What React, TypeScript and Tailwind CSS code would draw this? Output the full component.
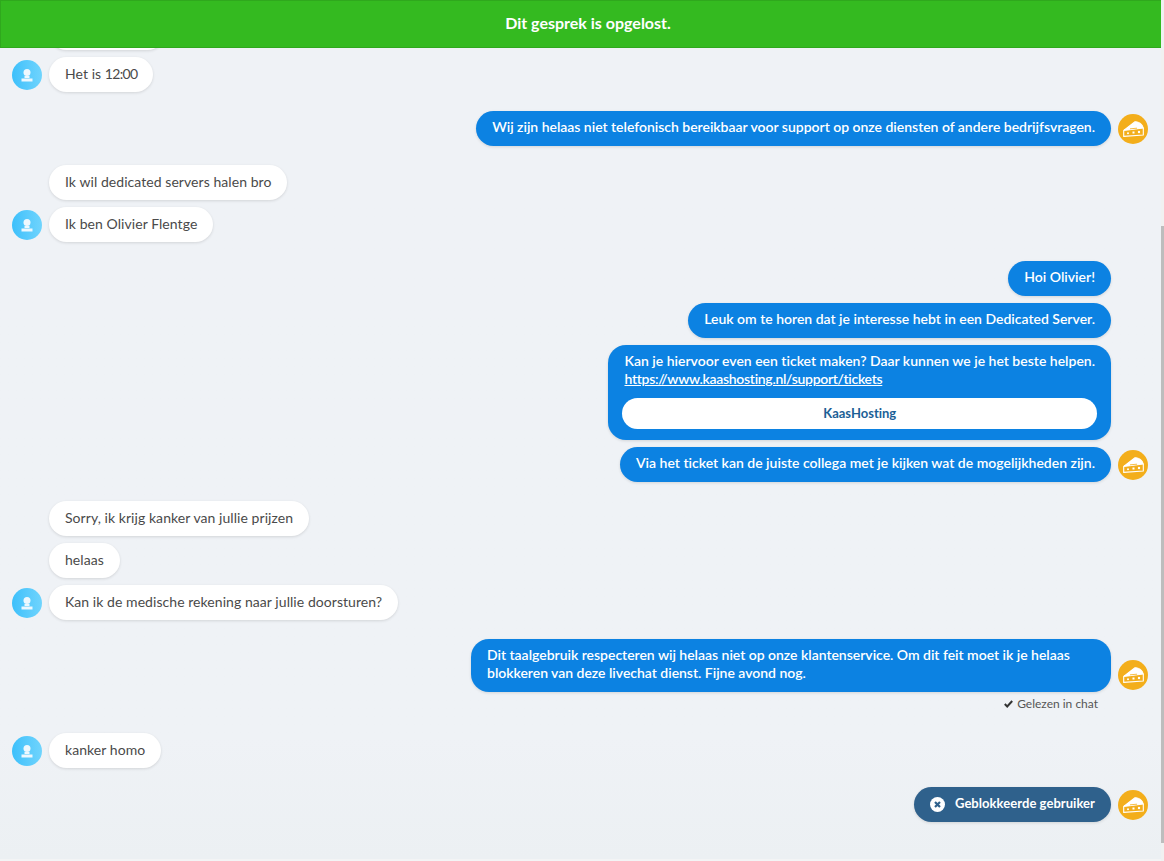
const font = { fontFamily: '"Lato", sans-serif' }

function UserAvatar() {
  return (
    <div className="w-[30px] h-[30px] rounded-full bg-gradient-to-r from-[#3cc0fb] to-[#6fd4fd] flex items-center justify-center shrink-0">
      <svg width="12" height="14" viewBox="0 0 12 14" fill="#eef8fe">
        <circle cx="6" cy="4.5" r="3.5" />
        <path d="M3.5 8h5v2h-5z" />
        <rect x="0.5" y="10.5" width="11" height="3" />
      </svg>
    </div>
  )
}

function CheeseAvatar() {
  return (
    <div className="w-[30px] h-[30px] rounded-full bg-[#f3ae1b] flex items-center justify-center shrink-0">
      <svg width="21" height="16" viewBox="0 0 21 16" fill="none" stroke="#fff" strokeWidth="1.1" strokeLinejoin="round">
        <path d="M0.7 9.5 V15.4 L20.3 14 V7" />
        <path d="M0.7 9.5 L12 0.8 C16 0.6 19.3 3.4 20.3 7 Z" fill="#fff" />
        <circle cx="5" cy="12.3" r="1" fill="#fff" stroke="none" />
        <rect x="9.5" y="10.5" width="2" height="2" fill="#fff" stroke="none" />
        <circle cx="16" cy="11" r="1.2" fill="#fff" stroke="none" />
        <path d="M7 7.8 L14 7.2" stroke="#f3ae1b" strokeWidth="0.8" />
      </svg>
    </div>
  )
}

function In({ children, avatar }: { children: React.ReactNode; avatar?: boolean }) {
  return (
    <div className="flex items-center">
      <div className="w-[49px] pl-3 shrink-0">{avatar && <UserAvatar />}</div>
      <div className="h-[35px] px-4 pb-[2px] flex items-center rounded-[18px] bg-white text-[#4a4a4a] text-[14px] tracking-[0.06px] shadow-[0_1px_3px_rgba(0,0,0,0.12)] whitespace-nowrap">
        <span>{children}</span>
      </div>
    </div>
  )
}

function Out({ children, avatar, wide }: { children: React.ReactNode; avatar?: boolean; wide?: boolean }) {
  return (
    <div className="flex items-end justify-end pr-4">
      <div className={wide ? "w-[640px] px-4 pt-[7px] pb-[10px] leading-[18px] rounded-[18px] bg-[#0c82e2] text-white text-[14px] font-semibold shadow-[0_1px_3px_rgba(0,0,0,0.12)]" : "px-4 pt-[7px] pb-[10px] leading-[18px] rounded-[18px] bg-[#0c82e2] text-white text-[14px] font-semibold shadow-[0_1px_3px_rgba(0,0,0,0.12)]"}>
        {children}
      </div>
      <div className="w-[37px] pl-[7px] mb-[2px] shrink-0">{avatar && <CheeseAvatar />}</div>
    </div>
  )
}

export default function App() {
  return (
    <div className="relative h-[861px] flex flex-col overflow-hidden bg-[#eff2f6] [font-variant-ligatures:none]" style={font}>
      <div className="h-12 shrink-0 pl-3 pb-[2px] bg-[#34ba20] border border-[#2fa81d] flex items-center justify-center text-white font-bold text-[16px]">
        Dit gesprek is opgelost.
      </div>
      <div className="flex-1 overflow-hidden flex flex-col bg-gradient-to-b from-[#eff2f6] from-[85%] to-[#ecf0f3]">
        <div className="flex flex-col gap-[7px] mt-[-33px]">
          <div className="ml-[49px] w-[116px] h-[35px] rounded-[18px] bg-white shadow-[0_1px_3px_rgba(0,0,0,0.12)]" />
          <In avatar>Het is <span className="tracking-[-0.7px]">12:00</span></In>
        </div>
        <div className="flex flex-col gap-[7px] mt-[19px]">
          <Out avatar><div className="tracking-[-0.02px]">Wij zijn helaas niet telefonisch bereikbaar voor support op onze diensten of andere bedrijfsvragen.</div></Out>
        </div>
        <div className="flex flex-col gap-[7px] mt-[19px]">
          <In>Ik wil dedicated servers halen bro</In>
          <In avatar>Ik ben Olivier Flentge</In>
        </div>
        <div className="flex flex-col gap-[7px] mt-[19px]">
          <Out>Hoi Olivier!</Out>
          <Out>Leuk om te horen dat je interesse hebt in een Dedicated Server.</Out>
          <Out>
            <div>Kan je hiervoor even een ticket maken? Daar kunnen we je het beste helpen.</div>
            <div className="underline tracking-[-0.3px]">https://www.kaashosting.nl/support/tickets</div>
            <div className="-mx-[2px] mt-[10px] mb-[1px] h-[31px] pb-[2px] rounded-[16px] bg-white text-[#1c5f96] text-[13px] font-bold flex items-center justify-center">KaasHosting</div>
          </Out>
          <Out avatar>Via het ticket kan de juiste collega met je kijken wat de mogelijkheden zijn.</Out>
        </div>
        <div className="flex flex-col gap-[7px] mt-[19px]">
          <In>Sorry, ik krijg kanker van jullie prijzen</In>
          <In>helaas</In>
          <In avatar>Kan ik de medische rekening naar jullie doorsturen?</In>
        </div>
        <div className="mt-[19px]">
          <Out avatar wide>
            <div className="tracking-[-0.02px]">
              Dit taalgebruik respecteren wij helaas niet op onze klantenservice. Om dit feit moet ik je helaas
              <br />
              blokkeren van deze livechat dienst. Fijne avond nog.
            </div>
          </Out>
          <div className="flex items-center justify-end gap-1 pr-[66px] mt-[6px] h-[12px] text-[12px] text-[#555]">
            <svg width="9" height="8" viewBox="0 0 9 8" fill="none" stroke="#333" strokeWidth="2"><path d="M0.8 4l2.4 2.5L8.2 1" /></svg>
            Gelezen in chat
          </div>
        </div>
        <div className="mt-[23px]">
          <In avatar>kanker homo</In>
        </div>
        <div className="mt-[19px] flex items-center justify-end pr-4">
          <div className="h-[35px] px-4 pb-[1px] flex items-center gap-[10px] rounded-[18px] bg-[#2f618c] text-white text-[13px] font-bold tracking-[0.05px] shadow-[0_1px_3px_rgba(0,0,0,0.12)]">
            <svg width="15" height="15" viewBox="0 0 15 15" className="shrink-0">
              <circle cx="7.5" cy="7.5" r="7.5" fill="#fff" />
              <path d="M5 5l5 5M10 5l-5 5" stroke="#2f618c" strokeWidth="2.2" />
            </svg>
            Geblokkeerde gebruiker
          </div>
          <div className="w-[37px] pl-[7px] shrink-0"><CheeseAvatar /></div>
        </div>
      </div>
      <div className="h-[2px] shrink-0 bg-[#f3f4f5]" />
      <div className="absolute right-0 top-0 bottom-0 w-[3px] bg-[#f1f1f1]">
        <div className="mt-[226px] h-[617px] bg-[#bdbdbd]" />
      </div>
    </div>
  )
}
